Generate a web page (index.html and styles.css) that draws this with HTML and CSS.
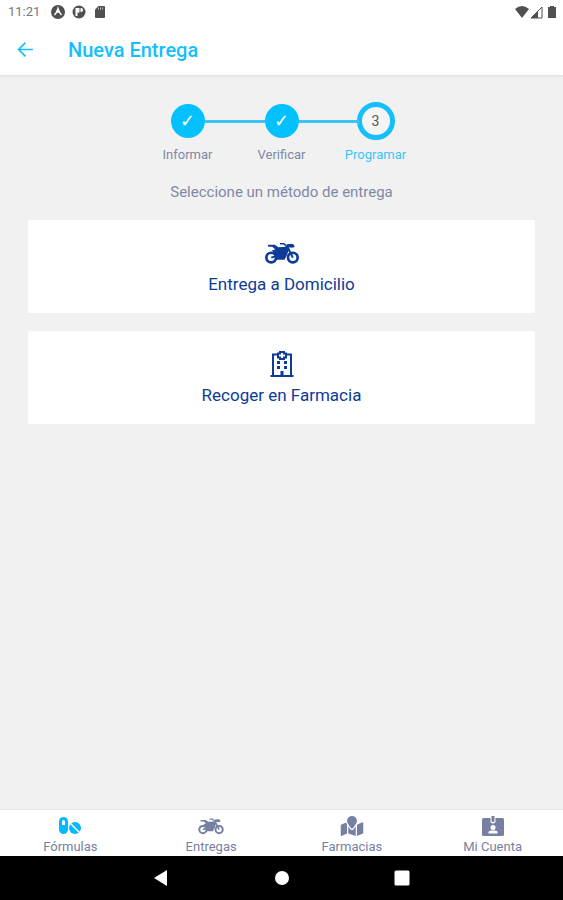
FILE: index.html
```html
<!DOCTYPE html>
<html lang="es">

<head>
    <meta charset="UTF-8">
    <meta name="viewport" content="width=device-width, initial-scale=1">
    <title>Nueva Entrega</title>
    <link rel="stylesheet" href="styles.css">
</head>

<body>

    <!-- Shared icon -->
    <svg class="sprite" aria-hidden="true">
        <symbol id="motorcycle" viewBox="0 0 33 22">
            <g fill="none" stroke="currentColor">
                <circle cx="6" cy="15" r="4.700" stroke-width="2.600" />
                <circle cx="27" cy="15" r="4.700" stroke-width="2.600" />
                <path d="M21.500 4l5.500 11M6 15l7-2" stroke-width="2" />
                <path d="M14.500 1.500h4l3 3.500" stroke-width="1.500" />
            </g>
            <path fill="currentColor" d="M3 2.500h6.500L13 5l8-.500 2 3-1.500 4.500-2.500 5h-7.500L9.500 14l-.500-3.500L6.500 8 10 7 7 4.500H3z" />
            <path fill="currentColor" d="M21 2l5.500-.500L28.500 3v2l-3 .500L21 4.500z" />
        </symbol>
    </svg>

    <header class="header">
        <div class="status">
            <span class="status__time">11:21</span>
            <svg class="status__icon" viewBox="0 0 14 14">
                <circle cx="7" cy="7" r="7" fill="#505050" />
                <path d="M3.500 10Q5.800 7.500 7 3.500Q8.200 7.500 10.500 10M5.800 7.500L7 6.300l1.200 1.200" fill="none" stroke="#fff" stroke-width="1.400" />
            </svg>
            <svg class="status__icon" viewBox="0 0 14 14">
                <circle cx="7" cy="7" r="6.500" fill="#505050" />
                <path d="M3.500 3h4v4.500h-2V11h-2z" fill="#fff" />
                <path d="M8.500 3h.500a2 2 0 0 1 0 4h-.500z" fill="#fff" />
            </svg>
            <svg class="status__icon" viewBox="0 0 14 14">
                <path d="M5.500 1H11a1 1 0 0 1 1 1v10a1 1 0 0 1-1 1H3a1 1 0 0 1-1-1V4.500z" fill="#505050" />
                <path d="M5.500 2.500v2M7.500 2.500v2M9.500 2.500v2" stroke="#bbb" />
            </svg>
            <span class="status__space"></span>
            <svg class="status__icon" viewBox="0 0 14 14">
                <path d="M0 4Q7-2 14 4L7 13z" fill="#505050" />
            </svg>
            <svg class="status__icon" viewBox="0 0 14 14">
                <path d="M1 13L12 2v11z" fill="none" stroke="#505050" />
                <path d="M1 13l7-7v7z" fill="#505050" />
            </svg>
            <svg class="status__icon" viewBox="0 0 14 14">
                <path d="M5 1h4v1h2v11H3V2h2z" fill="#505050" />
            </svg>
        </div>
        <div class="bar">
            <button class="bar__back" type="button" aria-label="Volver">
                <svg viewBox="0 0 16 16">
                    <path d="M15 8H2M8 1.500L1.500 8L8 14.500" fill="none" stroke="currentColor" stroke-width="1.600" />
                </svg>
            </button>
            <h1 class="bar__title">Nueva Entrega</h1>
        </div>
    </header>

    <main class="content">
        <ol class="steps">
            <li class="step">
                <span class="step__dot">✓</span>
                <span class="step__label">Informar</span>
            </li>
            <li class="step">
                <span class="step__dot">✓</span>
                <span class="step__label">Verificar</span>
            </li>
            <li class="step step--current">
                <span class="step__dot">3</span>
                <span class="step__label">Programar</span>
            </li>
        </ol>

        <p class="content__hint">Seleccione un método de entrega</p>

        <button class="option" type="button">
            <svg class="option__icon" viewBox="0 0 34 28">
                <use href="#motorcycle" y="3" width="34" height="23" />
            </svg>
            <span>Entrega a Domicilio</span>
        </button>

        <button class="option" type="button">
            <svg class="option__icon" viewBox="0 0 34 28">
                <g fill="none" stroke="currentColor" stroke-width="2">
                    <path d="M5.500 26h23M8 26V4.500h5M21 4.500h5V26" />
                    <path d="M15 2h4v1.500h2v4h-2V9h-4V7.500h-2v-4h2z" />
                </g>
                <path fill="currentColor" d="M12 11h3v3h-3zM19 11h3v3h-3zM12 16h3v3h-3zM19 16h3v3h-3zM15.500 21h3v5h-3z" />
            </svg>
            <span>Recoger en Farmacia</span>
        </button>
    </main>

    <nav class="tabs">
        <a class="tab tab--active" href="#formulas">
            <svg class="tab__icon" viewBox="0 0 26 20">
                <rect x="2" y="1" width="9" height="17" rx="4.500" fill="currentColor" />
                <path d="M5 9V5.500a1.500 1.500 0 0 1 3 0V9z" fill="#fff" />
                <circle cx="18" cy="12" r="6" fill="currentColor" />
                <path d="M13 7l10 10" stroke="#fff" stroke-width="1.500" />
            </svg>
            <span>Fórmulas</span>
        </a>
        <a class="tab" href="#entregas">
            <svg class="tab__icon" viewBox="0 0 26 20">
                <use href="#motorcycle" y="2" width="26" height="17" />
            </svg>
            <span>Entregas</span>
        </a>
        <a class="tab" href="#farmacias">
            <svg class="tab__icon" viewBox="0 0 576 512">
                <path fill="currentColor" d="M288 0c-69.590 0-126 56.410-126 126 0 56.260 82.350 158.800 113.900 196.020 6.390 7.540 17.820 7.540 24.200 0C331.650 284.800 414 182.260 414 126 414 56.410 357.590 0 288 0zM20.120 215.950A32 32 0 0 0 0 245.660v250.320c0 11.320 11.430 19.060 21.940 14.860L160 448V214.920c-8.840-15.980-16.070-31.540-21.250-46.420zM288 359.670c-14.070 0-27.380-6.180-36.510-16.960-19.660-23.200-40.570-49.620-59.490-76.720v182l192 64V266c-18.920 27.090-39.820 53.520-59.490 76.720-9.130 10.770-22.440 16.950-36.510 16.950zM554.060 161.160L416 224v288l139.880-55.950A32 32 0 0 0 576 426.340V176.020c0-11.320-11.430-19.060-21.940-14.860z" />
            </svg>
            <span>Farmacias</span>
        </a>
        <a class="tab" href="#cuenta">
            <svg class="tab__icon" viewBox="0 0 26 20">
                <rect x="2" y="2" width="22" height="18" rx="1.500" fill="currentColor" />
                <path d="M10.500 1v4a2.500 2.500 0 0 0 5 0V1z" fill="#fff" />
                <path d="M11.500 0h3v4.500a1.500 1.500 0 0 1-3 0z" fill="currentColor" />
                <circle cx="13" cy="11.500" r="2.500" fill="#fff" />
                <path d="M8.500 17.500v-1q0-2 3-2h3q3 0 3 2v1z" fill="#fff" />
            </svg>
            <span>Mi Cuenta</span>
        </a>
    </nav>

    <div class="system">
        <button class="system__button" type="button" aria-label="Atrás">
            <svg viewBox="0 0 16 16"><path d="M0 8l13-8v16z" fill="#fff" /></svg>
        </button>
        <button class="system__button" type="button" aria-label="Inicio">
            <svg viewBox="0 0 16 16"><circle cx="8" cy="8" r="7" fill="#fff" /></svg>
        </button>
        <button class="system__button" type="button" aria-label="Recientes">
            <svg viewBox="0 0 16 16"><rect x="0.500" y="0.500" width="15" height="15" rx="1.500" fill="#fff" /></svg>
        </button>
    </div>

</body>

</html>
```
FILE: styles.css
```css
* {
    box-sizing: border-box;
    padding: 0;
    margin: 0;
}

body {
    display: flex;
    flex-direction: column;
    min-height: 100vh;
    background-color: #f1f1f1;
    color: #8188a5;
    font-family: Roboto, sans-serif;
    font-size: 13px;
    line-height: 16px;
}

button {
    border: 0;
    background: none;
    font: inherit;
    cursor: pointer;
}

svg {
    display: block;
}

.sprite {
    position: absolute;
    width: 0;
    height: 0;
}

/* Header */
.header {
    background-color: #fff;
    border-bottom: 1px solid #e4e4e4;
    box-shadow: 0 1px 2px #e4e4e4;
}

.status {
    display: flex;
    align-items: center;
    gap: 7px;
    height: 24px;
    padding: 0 4px 0 8px;
}

.status__time {
    margin-right: 4px;
    color: #777;
    font-size: 13px;
}

.status__icon {
    width: 14px;
    height: 14px;
}

.status__space {
    flex: 1;
}

.status__space ~ .status__icon {
    margin-left: -6px;
}

.bar {
    display: flex;
    align-items: center;
    gap: 34px;
    height: 51px;
    padding: 0 17px;
    color: #14bffb;
}

.bar__back {
    color: inherit;
}

.bar__back svg {
    width: 17px;
    height: 17px;
}

.bar__title {
    font-size: 20px;
    font-weight: 500;
    line-height: 24px;
}

/* Content */
.content {
    flex: 1;
    padding: 26px 28px;
}

.steps {
    display: flex;
    justify-content: center;
    list-style: none;
}

.step {
    position: relative;
    display: flex;
    flex-direction: column;
    align-items: center;
    gap: 7px;
    width: 94px;
}

/* Line to the previous step */
.step + .step::before {
    content: "";
    position: absolute;
    top: 18px;
    right: 64px;
    width: 60px;
    height: 3px;
    background-color: #3cc4fa;
}

.step__dot {
    display: flex;
    align-items: center;
    justify-content: center;
    width: 34px;
    height: 34px;
    margin: 2px;
    border-radius: 50%;
    background-color: #03c1fe;
    color: #fff;
    font-family: "DejaVu Sans", sans-serif;
    font-size: 18px;
    font-weight: 700;
}

.step--current .step__dot {
    width: 38px;
    height: 38px;
    margin: 0;
    border: 5px solid #14bffb;
    background-color: #f4f4f4;
    color: #555;
    font-family: Roboto, sans-serif;
    font-size: 14px;
    font-weight: 400;
}

.step--current .step__label {
    color: #3cc4fa;
}

.content__hint {
    margin: 19px 0 18px;
    font-size: 15px;
    line-height: 20px;
    text-align: center;
}

.option {
    display: flex;
    flex-direction: column;
    align-items: center;
    gap: 7px;
    width: 100%;
    padding: 19px 16px;
    border-radius: 2px;
    background-color: #fff;
    color: #0d3b98;
    font-size: 17px;
    line-height: 20px;
}

.option + .option {
    margin-top: 18px;
}

.option__icon {
    width: 34px;
    height: 28px;
}

/* Bottom tabs */
.tabs {
    display: flex;
    height: 47px;
    padding-top: 6px;
    border-top: 1px solid #e4e4e4;
    background-color: #fff;
}

.tab {
    flex: 1;
    display: flex;
    flex-direction: column;
    align-items: center;
    gap: 3px;
    color: #7780a2;
    text-decoration: none;
}

.tab--active .tab__icon {
    color: #03b9fb;
}

.tab__icon {
    width: 26px;
    height: 20px;
}

.system {
    display: flex;
    align-items: center;
    justify-content: center;
    gap: 104px;
    height: 44px;
    background-color: #000;
}

.system__button svg {
    width: 16px;
    height: 16px;
}
```
